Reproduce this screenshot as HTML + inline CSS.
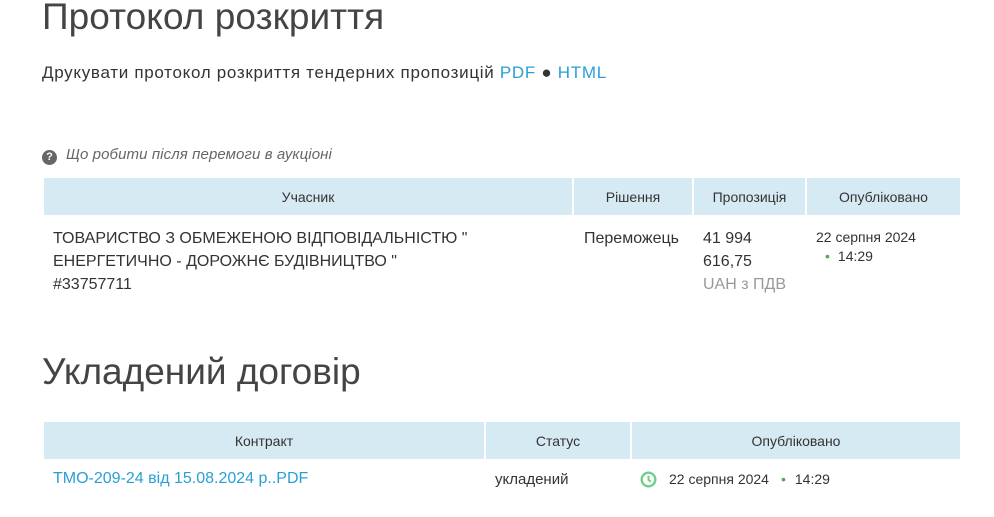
<!DOCTYPE html>
<html><head><meta charset="utf-8"><style>
body{margin:0;width:994px;height:517px;background:#fff;font-family:"Liberation Sans","DejaVu Sans",sans-serif;color:#333;position:relative;overflow:hidden}
.a{position:absolute;white-space:nowrap}
h1{position:absolute;margin:0;font-weight:normal;color:#444;left:42px;white-space:nowrap}
a{color:#2a9fd6;text-decoration:none}
.hd{position:absolute;background:#d5eaf2;font-size:14px;color:#333;display:flex;align-items:center;justify-content:center}
.t{font-size:16px;line-height:23px;color:#333}
</style></head><body>
<h1 style="top:-4px;font-size:37px;letter-spacing:0.05px">Протокол розкриття</h1>
<div class="a" style="left:42px;top:63px;font-size:17px;letter-spacing:0.7px">Друкувати протокол розкриття тендерних пропозицій <a>PDF</a> ● <a>HTML</a></div>
<div class="a" style="left:42px;top:146px;font-size:15px;font-style:italic;color:#666"><span style="display:inline-block;width:15px;height:15px;border-radius:50%;background:#666;color:#fff;font-size:11px;font-weight:bold;text-align:center;line-height:15px;font-style:normal;vertical-align:-1px;margin-right:9px">?</span><span style="letter-spacing:0.1px">Що робити після перемоги в аукціоні</span></div>
<div class="hd" style="left:44px;top:178px;width:528px;height:37px">Учасник</div>
<div class="hd" style="left:574px;top:178px;width:118px;height:37px">Рішення</div>
<div class="hd" style="left:694px;top:178px;width:111px;height:37px">Пропозиція</div>
<div class="hd" style="left:807px;top:178px;width:153px;height:37px">Опубліковано</div>
<div class="a t" style="left:53px;top:227px">ТОВАРИСТВО З ОБМЕЖЕНОЮ ВІДПОВІДАЛЬНІСТЮ "<br>ЕНЕРГЕТИЧНО - ДОРОЖНЄ БУДІВНИЦТВО "<br>#33757711</div>
<div class="a t" style="left:584px;top:227px">Переможець</div>
<div class="a t" style="left:703px;top:227px">41 994<br>616,75<br><span style="color:#999">UAH з ПДВ</span></div>
<div class="a" style="left:816px;top:228px;font-size:14px;line-height:19px">22 серпня 2024<br><span style="color:#5a5;margin:0 8px 0 9px">•</span>14:29</div>
<h1 style="top:351px;font-size:37px">Укладений договір</h1>
<div class="hd" style="left:44px;top:422px;width:440px;height:37px">Контракт</div>
<div class="hd" style="left:486px;top:422px;width:144px;height:37px">Статус</div>
<div class="hd" style="left:632px;top:422px;width:328px;height:37px">Опубліковано</div>
<div class="a" style="left:53px;top:470px;font-size:16px"><a>ТМО-209-24 від 15.08.2024 р..PDF</a></div>
<div class="a" style="left:495px;top:471px;font-size:15px">укладений</div>
<svg class="a" style="left:640px;top:471px" width="17" height="17" viewBox="0 0 17 17"><circle cx="8.5" cy="8.5" r="6.8" fill="none" stroke="#6cd08a" stroke-width="2.4"/><path d="M8.5 4.8V8.8L10.8 10.8" fill="none" stroke="#6cd08a" stroke-width="2"/></svg>
<div class="a" style="left:669px;top:471px;font-size:14px">22 серпня 2024<span style="color:#5a5;margin:0 9px 0 12px">•</span>14:29</div>
</body></html>
